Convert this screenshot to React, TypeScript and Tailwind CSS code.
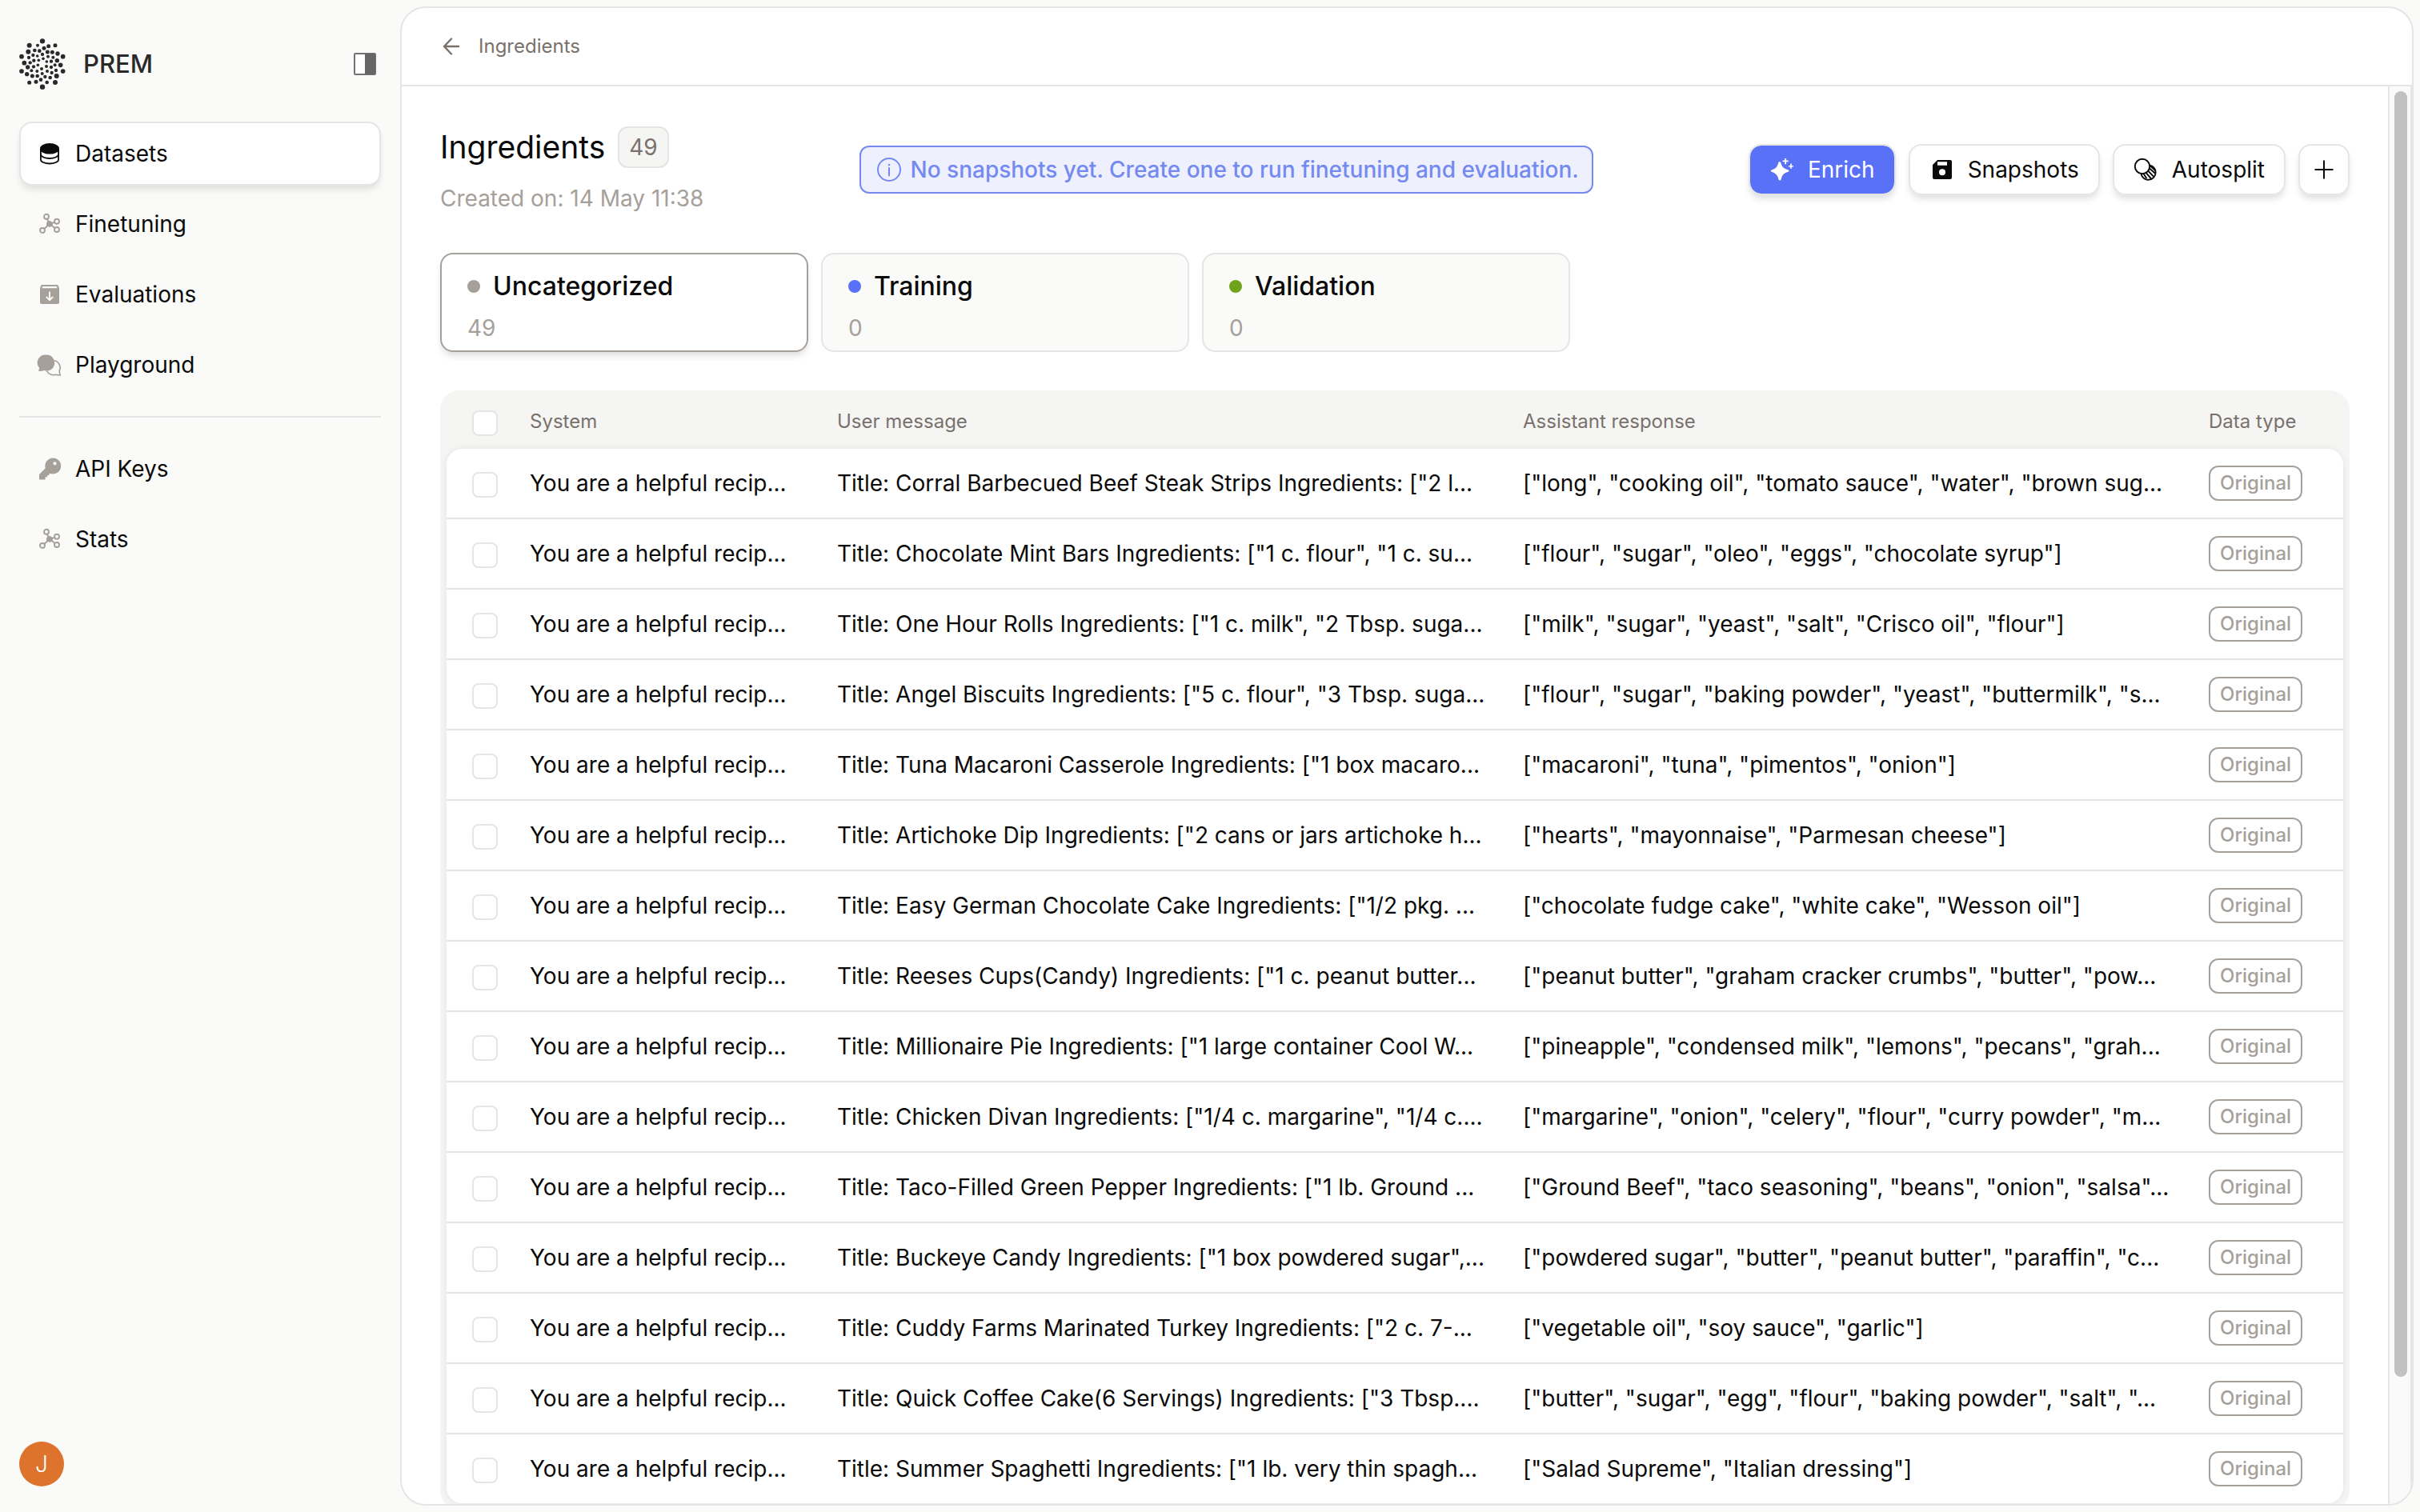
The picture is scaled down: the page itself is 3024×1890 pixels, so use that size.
import React from 'react';

type IconProps = { className?: string };

const LOGO_DOTS: [number, number, number][] = [
  [111, 34, 9.5], [62, 50, 9], [93, 50, 6], [134, 53, 7.5], [159, 50, 7.5], [117, 61, 7.5], [82, 69, 7],
  [58, 74, 9], [100, 71, 7], [130, 75, 7.5], [148, 76, 7.5], [168, 81, 8], [33, 92, 8.5], [60, 96, 6.5],
  [76, 87, 6.5], [92, 90, 5.5], [111, 84, 6.5], [132, 92, 6], [151, 95, 6], [188, 92, 8.5], [114, 100, 5.5],
  [43, 116, 8.5], [65, 115, 6.5], [79, 107, 6.5], [97, 106, 5.5], [127, 111, 5.5], [144, 110, 6.5],
  [166, 107, 8], [56, 132, 8], [78, 130, 6.5], [94, 124, 5.5], [108, 138, 6], [126, 129, 6], [144, 132, 6.5],
  [158, 124, 6], [179, 124, 8.5], [33, 147, 8.5], [53, 158, 8], [70, 145, 6], [91, 147, 6], [110, 156, 6],
  [129, 147, 6], [146, 153, 6.5], [162, 144, 6.5], [188, 147, 8.5], [73, 165, 7.5], [92, 165, 7],
  [121, 168, 6.5], [140, 171, 7], [164, 165, 9], [105, 179, 7], [87, 187, 7.5], [62, 190, 7.5],
  [128, 189, 7], [159, 189, 9], [111, 206, 9.5],
];

function Logo() {
  return (
    <svg viewBox="24 24 174 192" className="h-16 w-[58px]" fill="#292929" aria-hidden="true">
      {LOGO_DOTS.map(([x, y, r]) => (
        <circle key={`${x}-${y}`} cx={x} cy={y} r={r} />
      ))}
    </svg>
  );
}

function PanelIcon({ className }: IconProps) {
  return (
    <svg viewBox="0 0 28 28" className={className} aria-hidden="true">
      <rect x="1" y="1" width="26" height="26" rx="1" fill="#fff" stroke="#737373" strokeWidth="2" />
      <rect x="14" y="1" width="13" height="26" fill="#666" />
    </svg>
  );
}

function DatabaseIcon({ className }: IconProps) {
  return (
    <svg viewBox="0 0 28 28" className={className} fill="none" stroke="currentColor" strokeWidth="1.8" aria-hidden="true">
      <path d="M2 7.5C2 4 7.4 1 14 1s12 3 12 6.500v1C26 12 20.600 14.600 14 14.600S2 12 2 8.500z" fill="currentColor" stroke="none" />
      <path d="M2.900 8v13.500c0 2.800 5 5 11.100 5s11.100-2.200 11.100-5V8" />
      <path d="M2.900 14.800c0 2.800 5 5.200 11.100 5.200s11.100-2.400 11.100-5.200" />
    </svg>
  );
}

function HubIcon({ className }: IconProps) {
  return (
    <svg viewBox="0 0 28 28" className={className} fill="none" stroke="currentColor" strokeWidth="1.9" aria-hidden="true">
      <path d="M14 14 10.800 7.500M14 14l6.200-2.200M14 14l6.800 5.200M14 14l-7 6.200" />
      <path d="m14 9.700 3.900 2.300v4L14 18l-3.900-2v-4z" fill="currentColor" stroke="none" />
      <circle cx="10" cy="4.700" r="3" />
      <circle cx="23" cy="10.800" r="3" />
      <circle cx="23" cy="21" r="3" />
      <circle cx="5" cy="22" r="3" />
    </svg>
  );
}

function ArchiveIcon({ className }: IconProps) {
  return (
    <svg viewBox="0 0 28 28" className={className} aria-hidden="true">
      <path
        fill="currentColor"
        fillRule="evenodd"
        d="M4.800 2h18.400c.8 0 1.300.4 1.600 1.100L26 6.500V24a2 2 0 0 1-2 2H4a2 2 0 0 1-2-2V6.500l1.200-3.400C3.500 2.400 4 2 4.800 2zm.4 2-.8 2.200h19.200L22.800 4z"
      />
      <path d="M14 10.500v10M9.800 17l4.200 4.100 4.200-4.100" fill="none" stroke="#fafaf9" strokeWidth="1.900" />
    </svg>
  );
}

function ChatIcon({ className }: IconProps) {
  return (
    <svg viewBox="0 0 28 28" className={className} aria-hidden="true">
      <path fill="currentColor" d="M10 1.500a10 10 0 1 1-3.200 19.400c-1.700.8-4 1.200-6.600.9-.4-.1-.4-.5-.1-.8.900-1.100 1.100-2.200.9-3.200A10 10 0 0 1 10 1.500z" />
      <path
        fill="none"
        stroke="currentColor"
        strokeWidth="1.600"
        d="M20 8.800a9 9 0 0 1 6.200 12.900c0 2 .2 3.600 1 5.200-2 0-3.800 0-5.400-.6A9.500 9.500 0 0 1 10.400 21.600"
      />
    </svg>
  );
}

function KeyIcon({ className }: IconProps) {
  return (
    <svg viewBox="0 0 28 28" className={className} aria-hidden="true">
      <path
        fill="currentColor"
        fillRule="evenodd"
        d="M18 .5a10 10 0 1 1-2.600 19.600h-2v2h-2.200v2.200H8.600v2.200c0 .7-.4 1.100-1 1.100H2.200C1.400 27.600 1 27.200 1 26.400v-4.300c0-.8.2-1.300.8-1.900l6.900-6.900A10 10 0 0 1 18 .5zm2.500 4.700a2.100 2.100 0 1 0 0 4.200 2.100 2.100 0 0 0 0-4.200z"
      />
    </svg>
  );
}

function ArrowLeftIcon({ className }: IconProps) {
  return (
    <svg viewBox="0 0 24 24" className={className} fill="none" stroke="currentColor" strokeWidth="2.400" strokeLinecap="round" strokeLinejoin="round" aria-hidden="true">
      <path d="M21 12H3M12 2.500 3 12l9 9.500" />
    </svg>
  );
}

function InfoIcon({ className }: IconProps) {
  return (
    <svg viewBox="0 0 30 30" className={className} fill="none" stroke="currentColor" strokeWidth="2" aria-hidden="true">
      <circle cx="15" cy="15" r="14" />
      <path d="M15 13v9.500" strokeLinecap="round" />
      <circle cx="15" cy="9" r="1.300" fill="currentColor" stroke="none" />
    </svg>
  );
}

function SparklesIcon({ className }: IconProps) {
  return (
    <svg viewBox="0 0 28 28" className={className} fill="currentColor" aria-hidden="true">
      <path d="M12 4.400c.8-.4 2 0 2.300 1.200 1.400 4.800 3.200 7.200 8.800 8.600 1.900.5 1.900 2.100 0 2.700-5.200 1.500-7.200 3.600-8.600 9.500-.4 1.500-2.400 1.500-2.900 0-1.300-5.400-3.600-8-8.400-9.500-1.900-.6-1.900-2.200 0-2.700C7.800 12.900 10 10.400 11.200 5.400c.1-.5.4-.9.8-1z" />
      <path d="M21.100 0v2.600h2.600v1.700h-2.600v3h-1.900v-3h-2.600V2.600h2.600V0zM27.900 6.600v2.300h2v1.600h-2v2.200h-1.700v-2.200H24V8.900h2.200V6.600z" />
    </svg>
  );
}

function DiskIcon({ className }: IconProps) {
  return (
    <svg viewBox="0 0 28 28" className={className} fill="currentColor" aria-hidden="true">
      <path
        fillRule="evenodd"
        d="M10 2h16a2 2 0 0 1 2 2v20a2 2 0 0 1-2 2H6a2 2 0 0 1-2-2V8zm0 2.200v4.600h12V4.200zm6 9a4 4 0 1 0 0 8 4 4 0 0 0 0-8z"
      />
    </svg>
  );
}

function SplitIcon({ className }: IconProps) {
  return (
    <svg viewBox="0 0 28 28" className={className} fill="none" stroke="currentColor" strokeWidth="1.900" aria-hidden="true">
      <circle cx="11" cy="10" r="9.200" />
      <path d="M19.900 8.400a9.200 9.200 0 1 1-10.400 11" />
      <path d="m19.600 12.200 7.600 6.600M17.800 15.200l7.200 7.400M15.200 17.400l6.800 8M12.400 18.900l4 6.200" />
      <path d="m21 9.600 6.400 5.600" />
    </svg>
  );
}

function PlusIcon({ className }: IconProps) {
  return (
    <svg viewBox="0 0 28 28" className={className} fill="none" stroke="currentColor" strokeWidth="2" aria-hidden="true">
      <path d="M14 2.500v23M2.500 14h23" />
    </svg>
  );
}

type NavItem = { label: string; icon: (p: IconProps) => React.ReactElement; active?: boolean };

const MAIN_NAV: NavItem[] = [
  { label: 'Datasets', icon: DatabaseIcon, active: true },
  { label: 'Finetuning', icon: HubIcon },
  { label: 'Evaluations', icon: ArchiveIcon },
  { label: 'Playground', icon: ChatIcon },
];

const EXTRA_NAV: NavItem[] = [
  { label: 'API Keys', icon: KeyIcon },
  { label: 'Stats', icon: HubIcon },
];

function NavList({ items }: { items: NavItem[] }) {
  return (
    <ul className="flex flex-col gap-2">
      {items.map(({ label, icon: Icon, active }) => (
        <li key={label}>
          <a
            href="#"
            aria-current={active ? 'page' : undefined}
            className={
              active
                ? 'flex h-20 items-center gap-[18px] rounded-2xl border-2 border-neutral-200 bg-white px-[22px] shadow-[0_6px_10px_-2px_rgba(0,0,0,0.12)]'
                : 'flex h-20 items-center gap-[18px] rounded-2xl border-2 border-transparent px-[22px]'
            }
          >
            <Icon className={active ? 'size-7 text-neutral-950' : 'size-7 overflow-visible text-stone-400'} />
            <span>{label}</span>
          </a>
        </li>
      ))}
    </ul>
  );
}

function Sidebar() {
  return (
    <aside className="flex w-[500px] shrink-0 flex-col px-6 pt-12 pb-8">
      <div className="flex items-center justify-between pr-[6px]">
        <div className="flex items-center gap-[22px]">
          <Logo />
          <span className="text-[31px] font-medium text-[#292929]">PREM</span>
        </div>
        <button type="button" aria-label="Toggle sidebar">
          <PanelIcon className="size-7" />
        </button>
      </div>
      <nav className="mt-10">
        <NavList items={MAIN_NAV} />
        <hr className="my-6 border-t-2 border-neutral-200" />
        <NavList items={EXTRA_NAV} />
      </nav>
      <button
        type="button"
        aria-label="Account"
        className="mt-auto flex size-14 items-center justify-center rounded-full bg-[#dd732c] font-light text-white"
      >
        J
      </button>
    </aside>
  );
}

const BUTTON =
  'flex h-16 items-center gap-5 rounded-2xl border-2 border-neutral-200 px-6 shadow-[0_6px_10px_-2px_rgba(0,0,0,0.14)]';

function PageHeader() {
  return (
    <div className="flex items-start justify-between">
      <div className="flex flex-col">
        <div className="flex items-center gap-4">
          <h1 className="text-[39px] leading-[52px]">Ingredients</h1>
          <span className="flex h-[52px] items-center rounded-xl border-2 border-neutral-200 bg-stone-100 px-3 text-stone-500">
            49
          </span>
        </div>
        <p className="mt-[18px] leading-10 text-stone-400">Created on: 14 May 11:38</p>
      </div>
      <p className="mt-6 flex h-[60px] items-center gap-3 rounded-xl border-2 border-[#748af0] bg-[#eef0fd] pr-4 pl-5 font-medium text-[#748af0]">
        <InfoIcon className="size-[30px] shrink-0" />
        No snapshots yet. Create one to run finetuning and evaluation.
      </p>
      <div className="mt-[22px] flex gap-4">
        <button
          type="button"
          className="flex h-16 items-center gap-5 rounded-2xl border-2 border-neutral-200 bg-[#5971f6] bg-clip-padding px-6 text-white shadow-[0_6px_10px_-2px_rgba(0,0,0,0.14)]"
        >
          <SparklesIcon className="size-7 overflow-visible" />
          Enrich
        </button>
        <button type="button" className={BUTTON}>
          <DiskIcon className="size-7" />
          Snapshots
        </button>
        <button type="button" className={BUTTON}>
          <SplitIcon className="size-7 overflow-visible" />
          Autosplit
        </button>
        <button
          type="button"
          aria-label="Add"
          className="flex size-16 items-center justify-center rounded-2xl border-2 border-neutral-200 shadow-[0_6px_10px_-2px_rgba(0,0,0,0.14)]"
        >
          <PlusIcon className="size-7" />
        </button>
      </div>
    </div>
  );
}

const TABS = [
  { label: 'Uncategorized', count: 49, dot: 'size-4 rounded-full bg-stone-400', active: true },
  { label: 'Training', count: 0, dot: 'size-4 rounded-full bg-[#5971f6]', active: false },
  { label: 'Validation', count: 0, dot: 'size-4 rounded-full bg-[#6fa31b]', active: false },
];

function Tabs() {
  return (
    <div role="tablist" className="mt-12 flex gap-4">
      {TABS.map((tab) => (
        <button
          key={tab.label}
          type="button"
          role="tab"
          aria-selected={tab.active}
          className={
            tab.active
              ? 'flex h-[124px] w-[460px] flex-col items-start rounded-2xl border-2 border-stone-400 px-8 pt-4 shadow-[0_6px_10px_-2px_rgba(0,0,0,0.14)]'
              : 'flex h-[124px] w-[460px] flex-col items-start rounded-2xl border-2 border-neutral-200 bg-stone-50 px-8 pt-4'
          }
        >
          <span className="flex items-center gap-4 text-[32px] leading-[48px] font-medium">
            <span className={tab.dot} />
            {tab.label}
          </span>
          <span className="mt-2 leading-10 text-stone-400">{tab.count}</span>
        </button>
      ))}
    </div>
  );
}

const SYSTEM = 'You are a helpful recip...';

const ROWS: [string, string][] = [
  ['Title: Corral Barbecued Beef Steak Strips Ingredients: ["2 l...', '["long", "cooking oil", "tomato sauce", "water", "brown sug...'],
  ['Title: Chocolate Mint Bars Ingredients: ["1 c. flour", "1 c. su...', '["flour", "sugar", "oleo", "eggs", "chocolate syrup"]'],
  ['Title: One Hour Rolls Ingredients: ["1 c. milk", "2 Tbsp. suga...', '["milk", "sugar", "yeast", "salt", "Crisco oil", "flour"]'],
  ['Title: Angel Biscuits Ingredients: ["5 c. flour", "3 Tbsp. suga...', '["flour", "sugar", "baking powder", "yeast", "buttermilk", "s...'],
  ['Title: Tuna Macaroni Casserole Ingredients: ["1 box macaro...', '["macaroni", "tuna", "pimentos", "onion"]'],
  ['Title: Artichoke Dip Ingredients: ["2 cans or jars artichoke h...', '["hearts", "mayonnaise", "Parmesan cheese"]'],
  ['Title: Easy German Chocolate Cake Ingredients: ["1/2 pkg. ...', '["chocolate fudge cake", "white cake", "Wesson oil"]'],
  ['Title: Reeses Cups(Candy) Ingredients: ["1 c. peanut butter...', '["peanut butter", "graham cracker crumbs", "butter", "pow...'],
  ['Title: Millionaire Pie Ingredients: ["1 large container Cool W...', '["pineapple", "condensed milk", "lemons", "pecans", "grah...'],
  ['Title: Chicken Divan Ingredients: ["1/4 c. margarine", "1/4 c....', '["margarine", "onion", "celery", "flour", "curry powder", "m...'],
  ['Title: Taco-Filled Green Pepper Ingredients: ["1 lb. Ground ...', '["Ground Beef", "taco seasoning", "beans", "onion", "salsa"...'],
  ['Title: Buckeye Candy Ingredients: ["1 box powdered sugar",...', '["powdered sugar", "butter", "peanut butter", "paraffin", "c...'],
  ['Title: Cuddy Farms Marinated Turkey Ingredients: ["2 c. 7-...', '["vegetable oil", "soy sauce", "garlic"]'],
  ['Title: Quick Coffee Cake(6 Servings) Ingredients: ["3 Tbsp....', '["butter", "sugar", "egg", "flour", "baking powder", "salt", "...'],
  ['Title: Summer Spaghetti Ingredients: ["1 lb. very thin spagh...', '["Salad Supreme", "Italian dressing"]'],
];

function Checkbox({ label }: { label: string }) {
  return (
    <input
      type="checkbox"
      aria-label={label}
      className="mt-1 block size-8 appearance-none rounded-lg border-2 border-neutral-200 bg-white checked:bg-[#5971f6]"
    />
  );
}

function DataTable() {
  return (
    <div className="mt-12 rounded-3xl bg-stone-100 px-2 pb-2">
      <table className="w-full table-fixed border-separate border-spacing-0 text-left">
        <colgroup>
          <col className="w-20" />
          <col className="w-96" />
          <col />
          <col />
          <col className="w-48" />
        </colgroup>
        <thead>
          <tr className="h-[73px] text-2xl text-stone-500">
            <th className="pt-1 pl-8 font-normal"><Checkbox label="Select all rows" /></th>
            <th className="pt-1 pl-6 font-normal">System</th>
            <th className="pt-1 pl-6 font-normal">User message</th>
            <th className="pt-1 pl-6 font-normal">Assistant response</th>
            <th className="pt-1 pl-6 font-normal">Data type</th>
          </tr>
        </thead>
        <tbody className="rounded-[20px] shadow-[0_0_8px_rgba(0,0,0,0.08)] [&_td]:border-neutral-200 [&_td]:bg-white [&_tr:first-child_td:first-child]:rounded-tl-[20px] [&_tr:first-child_td:last-child]:rounded-tr-[20px] [&_tr:last-child_td:first-child]:rounded-bl-[20px] [&_tr:last-child_td:last-child]:rounded-br-[20px] [&_tr:not(:last-child)_td]:border-b-2">
          {ROWS.map(([user, assistant], i) => (
            <tr key={user} className="h-[88px] last:h-[86px]">
              <td className="pl-8"><Checkbox label={`Select row ${i + 1}`} /></td>
              <td className="truncate pl-6">{SYSTEM}</td>
              <td className="truncate pl-6">{user}</td>
              <td className="truncate pl-6">{assistant}</td>
              <td className="pl-6">
                <span className="flex h-11 w-fit items-center rounded-xl border-2 border-stone-400 px-3 text-2xl font-medium text-stone-400">
                  Original
                </span>
              </td>
            </tr>
          ))}
        </tbody>
      </table>
    </div>
  );
}

export default function App() {
  return (
    <div className="flex h-screen bg-[#fafaf9] font-['Inter',sans-serif] text-[28px] leading-10 text-neutral-950">
      <Sidebar />
      <main className="my-2 mr-2 flex min-w-0 grow flex-col overflow-hidden rounded-[32px] border-2 border-neutral-200 bg-white">
        <header className="flex h-[98px] shrink-0 items-center border-b-2 border-neutral-200 px-[50px] text-2xl text-stone-500">
          <a href="#" className="flex items-center gap-[22px]">
            <ArrowLeftIcon className="size-6" />
            Ingredients
          </a>
        </header>
        <div className="flex min-h-0 grow">
          <div className="min-w-0 grow overflow-hidden px-12 pt-[50px]">
            <PageHeader />
            <Tabs />
            <DataTable />
          </div>
          <div className="flex w-[30px] shrink-0 flex-col border-x-2 border-neutral-200 bg-neutral-50 px-[6px] pt-[6px]">
            <div className="h-[91%] w-4 rounded-full bg-[#c1c1c1]" />
          </div>
        </div>
      </main>
    </div>
  );
}
